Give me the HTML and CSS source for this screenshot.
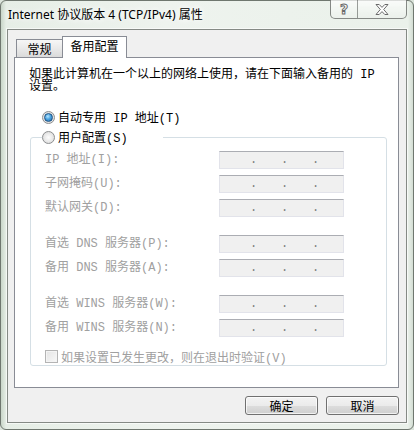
FILE: index.html
```html
<!DOCTYPE html>
<html>
<head>
  <meta charset="utf-8" />
  <title>Internet 协议版本 4 (TCP/IPv4) 属性</title>
  <link rel="stylesheet" href="styles.css">
</head>
<body>
  <div class="window">
    <div class="titlebar">
      <span class="title">Internet 协议版本 4 (TCP/IPv4) 属性</span>
      <div class="caption-btns">
        <button class="cap-btn help-btn">?</button>
        <button class="cap-btn close-btn">
          <svg viewBox="0 0 14 11" width="14" height="11">
            <polygon points="1,0.5 4.2,0.5 7,3.4 9.8,0.5 13,0.5 8.7,5.5 13,10.5 9.8,10.5 7,7.6 4.2,10.5 1,10.5 5.3,5.5"/>
          </svg>
        </button>
      </div>
    </div>

    <div class="client">
      <div class="tabs">
        <div class="tab">常规</div>
        <div class="tab active">备用配置</div>
      </div>

      <div class="tab-panel">
        <p class="intro">如果此计算机在一个以上的网络上使用，请在下面输入备用的 IP 设置。</p>

        <label class="option first"><span class="radio checked"></span>自动专用 IP 地址(T)</label>

        <fieldset class="group">
          <legend><label class="option"><span class="radio"></span>用户配置(S)</label></legend>

          <div class="field-set">
            <span class="field-label">IP 地址(I):</span>
            <div class="ip-box"><span>.</span><span>.</span><span>.</span></div>
            <span class="field-label">子网掩码(U):</span>
            <div class="ip-box"><span>.</span><span>.</span><span>.</span></div>
            <span class="field-label">默认网关(D):</span>
            <div class="ip-box"><span>.</span><span>.</span><span>.</span></div>
          </div>

          <div class="field-set">
            <span class="field-label">首选 DNS 服务器(P):</span>
            <div class="ip-box"><span>.</span><span>.</span><span>.</span></div>
            <span class="field-label">备用 DNS 服务器(A):</span>
            <div class="ip-box"><span>.</span><span>.</span><span>.</span></div>
          </div>

          <div class="field-set">
            <span class="field-label">首选 WINS 服务器(W):</span>
            <div class="ip-box"><span>.</span><span>.</span><span>.</span></div>
            <span class="field-label">备用 WINS 服务器(N):</span>
            <div class="ip-box"><span>.</span><span>.</span><span>.</span></div>
          </div>

          <label class="check-row"><span class="checkbox"></span>如果设置已发生更改，则在退出时验证(V)</label>
        </fieldset>
      </div>

      <div class="buttons">
        <button class="btn">确定</button>
        <button class="btn">取消</button>
      </div>
    </div>
  </div>
</body>
</html>
```

FILE: styles.css
```css
:root {
  --tab-border: #898c95;
  --disabled-text: #a0a0a0;
  --group-border: #d5dfe5;
}

* {
  box-sizing: border-box;
}

body {
  margin: 0;
  background: #dbe4db;
  font-family: "Noto Sans CJK SC", sans-serif;
  font-size: 12px;
  color: #000;
}

.window {
  width: 414px;
  height: 430px;
  display: flex;
  flex-direction: column;
  padding: 0 6px 6px;
  border: 1px solid #6f776f;
  border-radius: 6px;
  background:
    linear-gradient(90deg, #c9d6c9 0, #e6eee6 5px, #eef3ee 40%, #eaf1ea calc(100% - 5px), #d3ddd3 100%);
}

/* title bar */
.titlebar {
  height: 28px;
  flex: none;
  display: flex;
  align-items: flex-start;
  padding-left: 1px;
}

.title {
  font-family: "Noto Sans", "Noto Sans CJK SC", sans-serif;
  font-size: 12px;
  line-height: 28px;
  color: #000;
  text-shadow: 0 0 6px #fff, 0 0 10px #fff;
}

.caption-btns {
  margin-left: auto;
  margin-top: -1px;
  height: 19px;
  display: flex;
  border: 1px solid rgba(40, 45, 40, 0.55);
  border-top: 0;
  border-radius: 0 0 5px 5px;
  overflow: hidden;
  background: linear-gradient(rgba(255, 255, 255, 0.75), rgba(235, 240, 235, 0.55));
}

.cap-btn {
  height: 18px;
  padding: 0;
  border: 0;
  background: transparent;
  display: flex;
  align-items: center;
  justify-content: center;
}

.help-btn {
  width: 27px;
  border-right: 1px solid rgba(40, 45, 40, 0.45);
  font-family: "DejaVu Sans", sans-serif;
  font-weight: bold;
  font-size: 14px;
  color: #fff;
  -webkit-text-stroke: 1px #6a6a6a;
}

.close-btn {
  width: 48px;
}

.close-btn svg polygon {
  fill: #fff;
  stroke: #6a6a6a;
  stroke-width: 1;
}

/* client area */
.client {
  flex: 1;
  display: flex;
  flex-direction: column;
  border: 1px solid #858a85;
  background: #f0f0f0;
  box-shadow: 0 0 0 1px rgba(255, 255, 255, 0.6);
}

.tabs {
  display: flex;
  align-items: flex-end;
  height: 21px;
  margin: 6px 7px 0 6px;
  padding-left: 2px;
}

.tab {
  width: 47px;
  height: 18px;
  border: 1px solid var(--tab-border);
  border-bottom: 0;
  text-align: center;
  line-height: 17px;
  background: linear-gradient(#f6f6f6, #e9e9e9 50%, #dadada);
}

.tab.active {
  width: 65px;
  height: 22px;
  margin-left: -1px;
  margin-bottom: -1px;
  line-height: 18px;
  background: #fff;
  position: relative;
  z-index: 1;
}

.tab-panel {
  margin: 0 7px 0 6px;
  padding: 11px 11px 21px 14px;
  border: 1px solid var(--tab-border);
  background: #fff;
}

.intro,
.option,
.field-label,
.check-row {
  font-family: "Liberation Mono", "Noto Sans CJK SC", monospace;
  font-size: 12px;
}

.intro {
  margin: 0;
  line-height: 12px;
}

.option {
  display: flex;
  align-items: center;
  gap: 3px;
  height: 20px;
  white-space: nowrap;
}

.option.first {
  margin-top: 14px;
  padding-left: 13px;
}

.radio {
  width: 13px;
  height: 13px;
  flex: none;
  display: flex;
  align-items: center;
  justify-content: center;
  border: 1px solid #8c8e90;
  border-radius: 50%;
  background: radial-gradient(circle, #fdfdfd 0, #ececec 45%, #d4d4d4 100%);
}

.radio.checked::after {
  content: '';
  width: 7px;
  height: 7px;
  border-radius: 50%;
  border: 1px solid #1d5283;
  background: radial-gradient(circle at 40% 35%, #b5e6ff 0, #4aa3e0 45%, #1e64a8 100%);
}

/* alternate configuration group */
.group {
  width: 357px;
  min-width: 0;
  margin: 0 0 0 1px;
  padding: 4px 0 0 14px;
  border: 1px solid var(--group-border);
  border-radius: 3px;
}

.group legend {
  width: 121px;
  padding: 0;
  margin-left: -3px;
}

.field-set {
  display: grid;
  grid-template-columns: 174px 125px;
  grid-auto-rows: 18px;
  row-gap: 6px;
  align-items: center;
}

.field-set + .field-set {
  margin-top: 18px;
}

.field-label {
  color: var(--disabled-text);
  line-height: 18px;
  white-space: nowrap;
}

.ip-box {
  height: 18px;
  display: flex;
  padding-left: 30px;
  border: 1px solid #e2e3ea;
  border-top-color: #abadb3;
  background: #f0f0f0;
  font-family: "Liberation Mono", monospace;
  font-size: 12px;
  line-height: 16px;
  color: #7d7d7d;
}

.ip-box span {
  width: 31px;
}

.check-row {
  display: flex;
  align-items: center;
  gap: 3px;
  height: 17px;
  margin-top: 11px;
  color: var(--disabled-text);
}

.checkbox {
  width: 13px;
  height: 13px;
  flex: none;
  border: 1px solid #b4b4b4;
  background: linear-gradient(135deg, #e4e4e4, #f8f8f8);
  box-shadow: inset 0 0 0 1px #f4f4f4;
}

/* dialog buttons */
.buttons {
  display: flex;
  justify-content: flex-end;
  gap: 8px;
  margin: 8px 7px 0 0;
}

.btn {
  width: 73px;
  height: 19px;
  padding: 0;
  border: 1px solid #707070;
  border-radius: 3px;
  background: linear-gradient(#f3f3f3 0, #ebebeb 50%, #dddddd 50%, #cfcfcf 100%);
  box-shadow: inset 0 0 0 1px rgba(255, 255, 255, 0.7);
  font-family: "Noto Sans CJK SC", sans-serif;
  font-size: 12px;
  line-height: 17px;
  color: #000;
}
```
